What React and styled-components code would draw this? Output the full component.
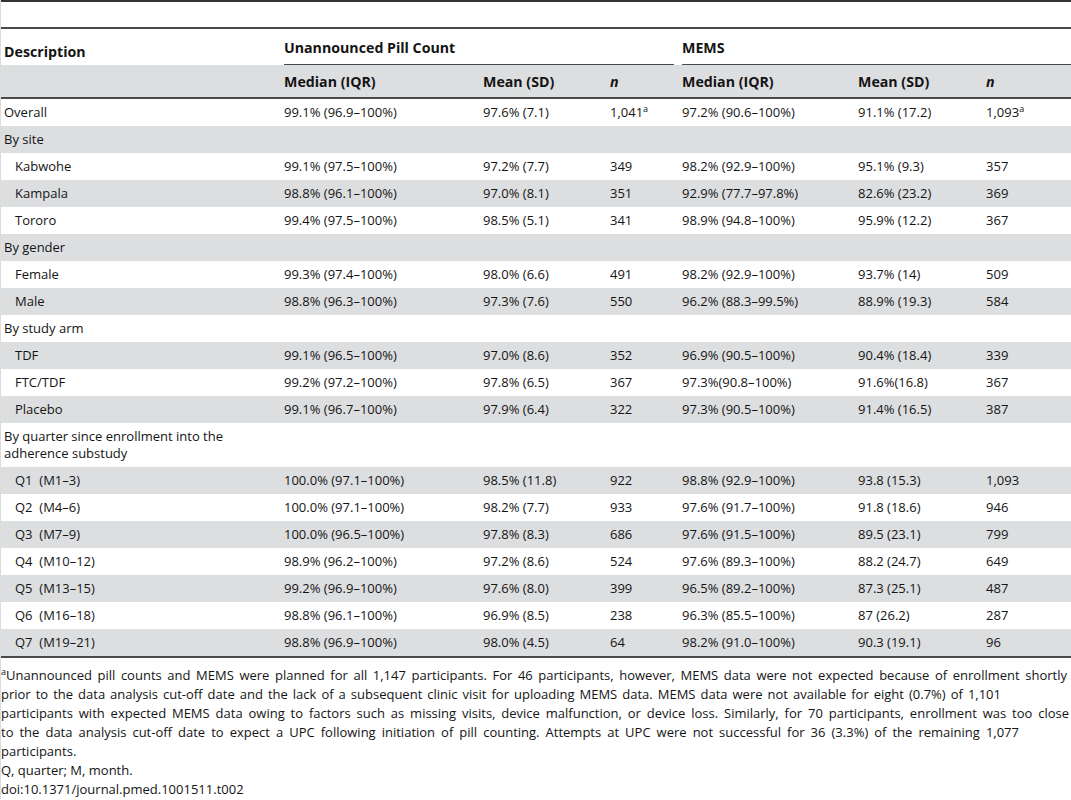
import React from "react";
import styled, { createGlobalStyle } from "styled-components";

const GlobalStyle = createGlobalStyle`
  html, body {
    margin: 0;
    padding: 0;
    background: #fff;
  }
  body {
    font-family: "Open Sans", "Noto Sans", "Liberation Sans", sans-serif;
    color: #141414;
    font-size: 13px;
  }
`;

const Page = styled.div`
  width: 1070px;
  border-left: 1px solid #dcdcdc;
`;

const TitleGap = styled.div`
  height: 25px;
  border-top: 2px solid #333;
`;

const Table = styled.table`
  width: 100%;
  border-collapse: collapse;
  table-layout: fixed;
  border-top: 2px solid #4a4a4a;
  border-bottom: 2px solid #4a4a4a;
`;

const HeadCell = styled.th`
  padding: 0;
  text-align: left;
  vertical-align: bottom;
  font-weight: 700;
  line-height: 17px;
  font-size: 14.2px;
`;

const DescHead = styled(HeadCell)`
  padding: 0 0 5px 3px;
`;

const GroupLabel = styled.div`
  padding: 10px 0 8px;
  margin-right: ${(p) => p.$gap}px;
  border-bottom: 1px solid #4a4a4a;
`;

const SubHeadRow = styled.tr`
  background: #dddee0;
  border-bottom: 2px solid #4a4a4a;
`;

const SubHead = styled(HeadCell)`
  height: 32px;
  vertical-align: middle;
  padding: 0;
  font-style: ${(p) => (p.$italic ? "italic" : "normal")};
`;

const Row = styled.tr`
  background: ${(p) => (p.$shade ? "#dddee0" : "#fff")};
`;

const Cell = styled.td`
  padding: 5px 0;
  line-height: 17px;
  height: 17px;
  vertical-align: middle;
  white-space: nowrap;
`;

const LabelCell = styled(Cell)`
  padding-left: ${(p) => (p.$indent ? 14 : 3)}px;
  white-space: normal;
`;

const Sup = styled.sup`
  font-size: 9px;
  line-height: 0;
  vertical-align: 5px;
`;

const Notes = styled.div`
  padding: 8px 0 0 0;
  line-height: 19px;
  font-size: 13px;
`;

const NoteLine = styled.div`
  width: ${(p) => (p.$w ? `${p.$w}px` : "auto")};
  text-align: ${(p) => (p.$w ? "justify" : "left")};
  text-align-last: ${(p) => (p.$w ? "justify" : "auto")};
`;

const widths = [283, 199, 127, 72, 176, 128, 85];

const withSup = (v) =>
  v.endsWith("a") ? (
    <>
      {v.slice(0, -1)}
      <Sup>a</Sup>
    </>
  ) : (
    v
  );

const rows = [
  { label: "Overall", v: ["99.1% (96.9–100%)", "97.6% (7.1)", "1,041a", "97.2% (90.6–100%)", "91.1% (17.2)", "1,093a"] },
  { label: "By site" },
  { label: "Kabwohe", sub: true, v: ["99.1% (97.5–100%)", "97.2% (7.7)", "349", "98.2% (92.9–100%)", "95.1% (9.3)", "357"] },
  { label: "Kampala", sub: true, v: ["98.8% (96.1–100%)", "97.0% (8.1)", "351", "92.9% (77.7–97.8%)", "82.6% (23.2)", "369"] },
  { label: "Tororo", sub: true, v: ["99.4% (97.5–100%)", "98.5% (5.1)", "341", "98.9% (94.8–100%)", "95.9% (12.2)", "367"] },
  { label: "By gender" },
  { label: "Female", sub: true, v: ["99.3% (97.4–100%)", "98.0% (6.6)", "491", "98.2% (92.9–100%)", "93.7% (14)", "509"] },
  { label: "Male", sub: true, v: ["98.8% (96.3–100%)", "97.3% (7.6)", "550", "96.2% (88.3–99.5%)", "88.9% (19.3)", "584"] },
  { label: "By study arm" },
  { label: "TDF", sub: true, v: ["99.1% (96.5–100%)", "97.0% (8.6)", "352", "96.9% (90.5–100%)", "90.4% (18.4)", "339"] },
  { label: "FTC/TDF", sub: true, v: ["99.2% (97.2–100%)", "97.8% (6.5)", "367", "97.3%(90.8–100%)", "91.6%(16.8)", "367"] },
  { label: "Placebo", sub: true, v: ["99.1% (96.7–100%)", "97.9% (6.4)", "322", "97.3% (90.5–100%)", "91.4% (16.5)", "387"] },
  { label: ["By quarter since enrollment into the", "adherence substudy"] },
  { label: "Q1  (M1–3)", sub: true, v: ["100.0% (97.1–100%)", "98.5% (11.8)", "922", "98.8% (92.9–100%)", "93.8 (15.3)", "1,093"] },
  { label: "Q2  (M4–6)", sub: true, v: ["100.0% (97.1–100%)", "98.2% (7.7)", "933", "97.6% (91.7–100%)", "91.8 (18.6)", "946"] },
  { label: "Q3  (M7–9)", sub: true, v: ["100.0% (96.5–100%)", "97.8% (8.3)", "686", "97.6% (91.5–100%)", "89.5 (23.1)", "799"] },
  { label: "Q4  (M10–12)", sub: true, v: ["98.9% (96.2–100%)", "97.2% (8.6)", "524", "97.6% (89.3–100%)", "88.2 (24.7)", "649"] },
  { label: "Q5  (M13–15)", sub: true, v: ["99.2% (96.9–100%)", "97.6% (8.0)", "399", "96.5% (89.2–100%)", "87.3 (25.1)", "487"] },
  { label: "Q6  (M16–18)", sub: true, v: ["98.8% (96.1–100%)", "96.9% (8.5)", "238", "96.3% (85.5–100%)", "87 (26.2)", "287"] },
  { label: "Q7  (M19–21)", sub: true, v: ["98.8% (96.9–100%)", "98.0% (4.5)", "64", "98.2% (91.0–100%)", "90.3 (19.1)", "96"] },
];

const subHeads = ["Median (IQR)", "Mean (SD)", "n", "Median (IQR)", "Mean (SD)", "n"];

const notes = [
  { w: 1066, t: "Unannounced pill counts and MEMS were planned for all 1,147 participants. For 46 participants, however, MEMS data were not expected because of enrollment shortly", sup: true },
  { w: 1000, t: "prior to the data analysis cut-off date and the lack of a subsequent clinic visit for uploading MEMS data. MEMS data were not available for eight (0.7%) of 1,101" },
  { w: 1068, t: "participants with expected MEMS data owing to factors such as missing visits, device malfunction, or device loss. Similarly, for 70 participants, enrollment was too close" },
  { w: 1018, t: "to the data analysis cut-off date to expect a UPC following initiation of pill counting. Attempts at UPC were not successful for 36 (3.3%) of the remaining 1,077" },
  { t: "participants." },
  { t: "Q, quarter; M, month." },
  { t: "doi:10.1371/journal.pmed.1001511.t002" },
];

export default function App() {
  return (
    <Page>
      <GlobalStyle />
      <TitleGap />
      <Table>
        <colgroup>
          {widths.map((w, i) => (
            <col key={i} style={{ width: w }} />
          ))}
        </colgroup>
        <thead>
          <tr>
            <DescHead>Description</DescHead>
            <HeadCell colSpan={3}>
              <GroupLabel $gap={8}>Unannounced Pill Count</GroupLabel>
            </HeadCell>
            <HeadCell colSpan={3}>
              <GroupLabel $gap={0}>MEMS</GroupLabel>
            </HeadCell>
          </tr>
          <SubHeadRow>
            <SubHead />
            {subHeads.map((h, i) => (
              <SubHead key={i} $italic={h === "n"}>
                {h}
              </SubHead>
            ))}
          </SubHeadRow>
        </thead>
        <tbody>
          {rows.map((r, i) => (
            <Row key={i} $shade={i % 2 === 1}>
              <LabelCell $indent={r.sub}>
                {Array.isArray(r.label) ? (
                  <>
                    {r.label[0]}
                    <br />
                    {r.label[1]}
                  </>
                ) : (
                  <span style={{ whiteSpace: "pre" }}>{r.label}</span>
                )}
              </LabelCell>
              {(r.v || ["", "", "", "", "", ""]).map((v, j) => (
                <Cell key={j}>{withSup(v)}</Cell>
              ))}
            </Row>
          ))}
        </tbody>
      </Table>
      <Notes>
        {notes.map((n, i) => (
          <NoteLine key={i} $w={n.w}>
            {n.sup && <Sup>a</Sup>}
            {n.t}
          </NoteLine>
        ))}
      </Notes>
    </Page>
  );
}
